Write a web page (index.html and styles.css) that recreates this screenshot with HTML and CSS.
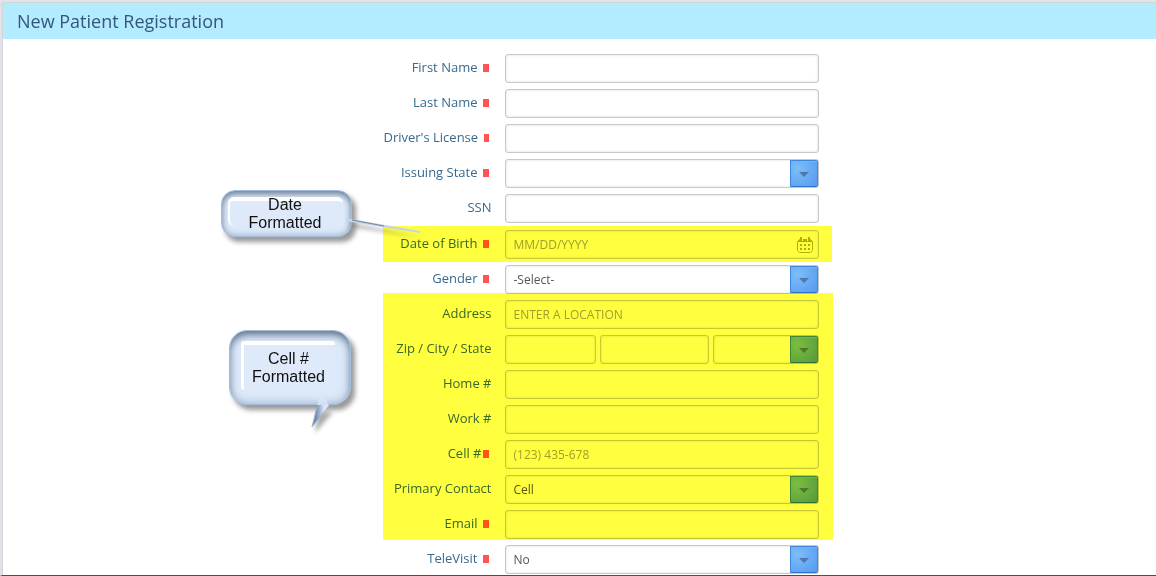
FILE: index.html
```html
<!DOCTYPE html>
<html lang="en">
<head>
<meta charset="utf-8">
<title>New Patient Registration</title>
<link rel="stylesheet" href="styles.css">
</head>
<body>
<main class="page">
  <h1 class="page-title">New Patient Registration</h1>
  <form class="form">
    <div class="rows">
      <div class="row"><label class="label required" for="first">First Name</label><input class="control" id="first" type="text"></div>
      <div class="row"><label class="label required" for="last">Last Name</label><input class="control" id="last" type="text"></div>
      <div class="row"><label class="label required" for="license">Driver's License</label><input class="control" id="license" type="text"></div>
      <div class="row"><label class="label required" for="issuing">Issuing State</label>
        <div class="select"><select class="control" id="issuing"><option></option></select><span class="arrow"></span></div></div>
      <div class="row"><label class="label" for="ssn">SSN</label><input class="control" id="ssn" type="text"></div>
    </div>
    <div class="rows marked marked-date">
      <div class="row"><label class="label required" for="dob">Date of Birth</label>
        <div class="date"><input class="control" id="dob" type="text" placeholder="MM/DD/YYYY">
          <svg class="calendar" viewBox="0 0 16 16" width="16" height="16" aria-hidden="true">
            <path d="M2.5 2.5h11l2 2v9l-2 2h-11l-2-2v-9z" fill="none" stroke="currentColor"/>
            <path d="M1 3h14v2H1z" fill="currentColor"/>
            <path d="M3 0h2v4H3zM11 0h2v4h-2z" fill="currentColor"/>
            <path d="M5 2h1v2H5zM10 2h1v2h-1z" fill="#fff"/>
            <path d="M3 7h2v2H3zM7 7h2v2H7zM11 7h2v2h-2zM3 11h2v2H3zM7 11h2v2H7zM11 11h2v2h-2z" fill="currentColor"/>
          </svg></div></div>
    </div>
    <div class="rows">
      <div class="row"><label class="label required" for="gender">Gender</label>
        <div class="select"><select class="control" id="gender"><option>-Select-</option></select><span class="arrow"></span></div></div>
    </div>
    <div class="rows marked marked-contact">
      <div class="row"><label class="label" for="address">Address</label><input class="control" id="address" type="text" placeholder="ENTER A LOCATION"></div>
      <div class="row"><label class="label" for="zip">Zip / City / State</label>
        <div class="split"><input class="control" id="zip" type="text" aria-label="Zip"><input class="control" type="text" aria-label="City">
          <div class="select"><select class="control" aria-label="State"><option></option></select><span class="arrow"></span></div></div></div>
      <div class="row"><label class="label" for="home">Home #</label><input class="control" id="home" type="text"></div>
      <div class="row"><label class="label" for="work">Work #</label><input class="control" id="work" type="text"></div>
      <div class="row"><label class="label required tight" for="cell">Cell #</label><input class="control" id="cell" type="text" placeholder="(123) 435-678"></div>
      <div class="row"><label class="label" for="primary">Primary Contact</label>
        <div class="select"><select class="control" id="primary"><option>Cell</option></select><span class="arrow"></span></div></div>
      <div class="row"><label class="label required" for="email">Email</label><input class="control" id="email" type="email"></div>
    </div>
    <div class="rows">
      <div class="row"><label class="label required" for="televisit">TeleVisit</label>
        <div class="select"><select class="control" id="televisit"><option>No</option></select><span class="arrow"></span></div></div>
    </div>

    <div class="callout callout-date">
      <span class="shine"></span>
      <svg class="tail" width="80" height="30" viewBox="0 0 80 30" aria-hidden="true">
        <path d="M5 8L6 12L78 23z" class="tail-shadow"/>
        <path d="M0 3L0 6L5 7L74 18L74 16L5 4z" fill="#c3d5ea"/>
        <path d="M6 5L38 11" stroke="#71869f" fill="none"/>
      </svg>
      <p class="callout-text">Date<br>Formatted</p>
    </div>
    <div class="callout callout-cell">
      <span class="shine"></span>
      <svg class="tail" width="40" height="48" viewBox="0 0 40 48" aria-hidden="true">
        <defs>
          <linearGradient id="tail-fill"><stop offset="0.2" stop-color="#7088a2"/><stop offset="0.5" stop-color="#a9bdd5"/><stop offset="0.7" stop-color="#d9e7f8"/></linearGradient>
          <linearGradient id="tail-top" x2="0" y2="1"><stop offset="0" stop-color="#deeafa"/><stop offset="1" stop-color="#cfdef0"/></linearGradient>
        </defs>
        <path d="M15 22L30 22L12 43z" class="tail-shadow"/>
        <path d="M17 3L22 7L26 16L14 16z" fill="url(#tail-top)"/>
        <path d="M14 15L26 15L20 23L9 37z" fill="url(#tail-fill)"/>
        <path d="M9 37L14 17M9 37L20 23L26 17" stroke="#9bb5d4" fill="none"/>
      </svg>
      <p class="callout-text">Cell #<br>Formatted</p>
    </div>
  </form>
</main>
</body>
</html>
```
FILE: styles.css
```css
* { box-sizing: border-box; }

body {
  margin: 0;
  background: #fff;
  font-family: "Open Sans", sans-serif;
}

.page {
  min-height: 100vh;
  border-top: 2px solid #dfe5e8;
  border-left: 2px solid #dfe3e8;
  border-bottom: 1px solid #1b5a92;
  box-shadow: inset 1px 1px 0 #d3d5d8;
  padding: 1px 0 0 1px;
}

.page-title {
  margin: 0;
  padding: 0 14px;
  background: #b3ebff;
  color: #34567c;
  font-size: 18px;
  font-weight: 400;
  line-height: 36px;
}

.form {
  position: relative;
  width: 450px;
  margin-left: 33%;
  padding-top: 15px;
}

.rows {
  display: grid;
  gap: 6px;
}

.rows + .rows { margin-top: 6px; }

.row {
  display: grid;
  grid-template-columns: 108px 1fr;
  gap: 14px;
  padding-right: 14px;
}

.label {
  display: flex;
  justify-content: flex-end;
  align-items: center;
  height: 25px;
  color: #386a8f;
  font-size: 13px;
  white-space: nowrap;
}

.required::after {
  content: "";
  width: 6px;
  height: 8px;
  margin: 2px 2px 0 6px;
  background: #ff5454;
}

.tight::after { margin-left: 2px; }

.control {
  display: block;
  width: 100%;
  min-width: 0;
  height: 29px;
  padding: 0 7px;
  border: 1px solid #c8c8c8;
  border-radius: 3px;
  background: #fff;
  box-shadow: inset 0 0 3px #ddd;
  color: #555;
  font: 12px "Open Sans", sans-serif;
  appearance: none;
}

.control::placeholder { color: #a0a0a0; opacity: 1; }

.select, .date { position: relative; }

.arrow {
  position: absolute;
  top: 1px;
  right: 1px;
  display: grid;
  place-items: center;
  width: 28px;
  height: 27px;
  border: 1px solid #3f87dc;
  border-bottom-color: #2b72cb;
  border-radius: 0 2px 2px 0;
  background: radial-gradient(circle at 25% 30%, #7dbdf8, #559af1);
  box-shadow: inset 0 1px 0 #78b4f5;
  pointer-events: none;
}

.arrow::before {
  content: "";
  margin-top: 2px;
  border: 5px solid transparent;
  border-top-color: #4d78a7;
  border-bottom: 0;
}

.calendar {
  position: absolute;
  top: 7px;
  right: 6px;
  color: #b0b000;
}

.split {
  display: grid;
  grid-template-columns: 91fr 109fr 106fr;
  gap: 4px;
}

.marked { position: relative; }

.marked::after {
  content: "";
  position: absolute;
  inset: 0;
  background: #ffff40;
  mix-blend-mode: multiply;
  pointer-events: none;
}

.rows + .marked-date { margin-top: 7px; }
.marked-date::after { inset: -4px 1px -3px 0; }
.marked-contact::after { inset: -7px 0 -1px 0; }

.callout {
  position: absolute;
  display: grid;
  place-items: center;
  border: 1px solid #a3bddb;
  background: #dce9f9;
}

.callout-date {
  top: 151px;
  left: -162px;
  width: 131px;
  height: 47px;
  border-radius: 14px;
  box-shadow: inset 0 4px 7px -2px #60758e, inset 0 0 7px #94a9c3, 4px 5px 5px #999;
}

.callout-cell {
  top: 291px;
  left: -154px;
  width: 122px;
  height: 75px;
  border-radius: 18px;
  box-shadow: inset 0 6px 9px -3px #586e89, inset 0 0 10px #94a9c3, 4px 5px 5px #999;
}

.shine {
  position: absolute;
  background: #deeafa;
}

.callout-date .shine {
  inset: 6px 8px 10px 6px;
  border-top: 4px solid #fff;
  border-left: 2px solid #fff;
  border-radius: 6px;
}

.callout-cell .shine {
  inset: 10px 15px 14px 11px;
  border-top: 4px solid #fff;
  border-left: 3px solid #fff;
  border-radius: 3px;
}

.tail { position: absolute; overflow: visible; }
.callout-date .tail { top: 24px; left: 124px; }
.callout-cell .tail { top: 59px; left: 73px; }

.tail-shadow {
  fill: #555;
  opacity: 0.5;
  filter: blur(2px);
}

.callout-text {
  position: relative;
  margin: 0;
  padding-right: 4px;
  color: #111;
  font: 16px/18px "Liberation Sans", Arial, sans-serif;
  text-align: center;
}
```
